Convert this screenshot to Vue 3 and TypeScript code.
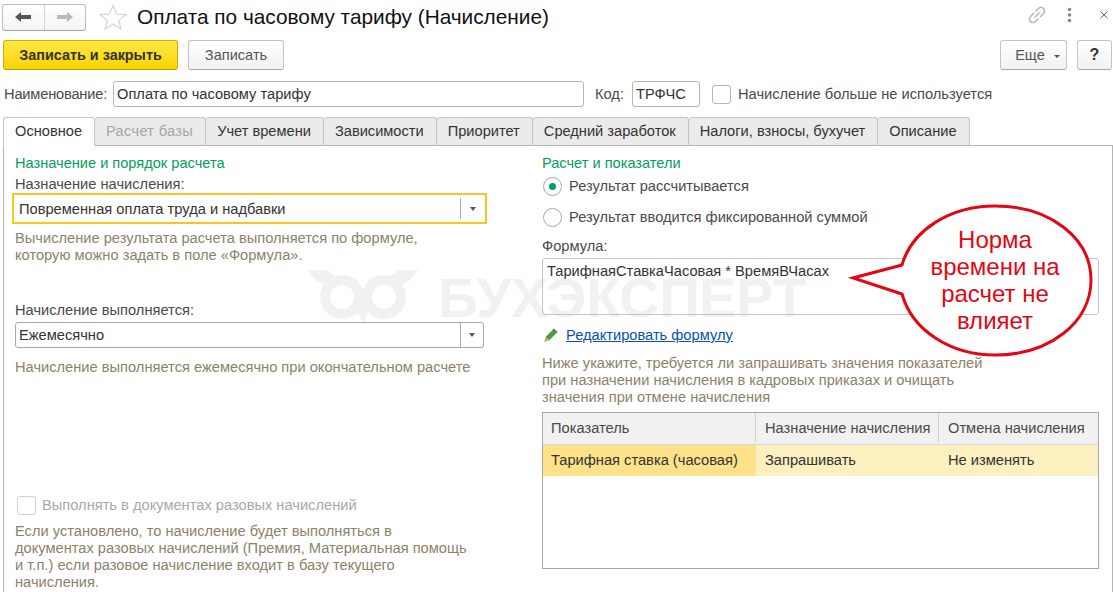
<script setup lang="ts">
const tabs: { name: string; active?: boolean; disabled?: boolean }[] = [
  { name: 'Основное', active: true },
  { name: 'Расчет базы', disabled: true },
  { name: 'Учет времени' },
  { name: 'Зависимости' },
  { name: 'Приоритет' },
  { name: 'Средний заработок' },
  { name: 'Налоги, взносы, бухучет' },
  { name: 'Описание' },
]
</script>

<template>
  <div class="page">
    <header class="head">
      <div class="nav">
        <button class="nav-btn">
          <svg width="18" height="12" viewBox="0 0 18 12"><path d="M1 6 L7 1 V4 H17 V8 H7 V11 Z" fill="#555" /></svg>
        </button>
        <button class="nav-btn">
          <svg width="18" height="12" viewBox="0 0 18 12"><path d="M17 6 L11 1 V4 H1 V8 H11 V11 Z" fill="#bbb" /></svg>
        </button>
      </div>
      <svg class="star" width="28" height="26" viewBox="0 0 28 26">
        <path d="M14 1.500 L17.600 10 L26.800 10.600 L19.700 16.400 L22 25 L14 20.300 L6 25 L8.300 16.400 L1.200 10.600 L10.400 10 Z" fill="#fff" stroke="#d4d4d4" stroke-width="1.200" />
      </svg>
      <h1 class="title">Оплата по часовому тарифу (Начисление)</h1>
      <div class="head-icons">
        <svg width="20" height="20" viewBox="0 0 20 20" fill="none" stroke="#b5b5b5" stroke-width="1.500">
          <path d="M8.500 6.500 L11.500 3.500 A3.200 3.200 0 0 1 16.500 8.500 L13 12" />
          <path d="M11.500 13.500 L8.500 16.500 A3.200 3.200 0 0 1 3.500 11.500 L7 8" />
          <path d="M7.500 12.500 L12.500 7.500" />
        </svg>
        <svg class="kebab" width="6" height="16" viewBox="0 0 6 16" fill="#8a8a8a"><circle cx="2.500" cy="2.500" r="1.800" /><circle cx="2.500" cy="8" r="1.800" /><circle cx="2.500" cy="13.500" r="1.800" /></svg>
        <svg class="close" width="8" height="8" viewBox="0 0 8 8" stroke="#666" stroke-width="1" fill="none"><path d="M0.500 0.500 L7.500 7.500 M7.500 0.500 L0.500 7.500" /></svg>
      </div>
    </header>

    <div class="toolbar">
      <button class="btn primary">Записать и закрыть</button>
      <button class="btn">Записать</button>
      <div class="spacer"></div>
      <button class="btn more">Еще <i class="caret"></i></button>
      <button class="btn help">?</button>
    </div>

    <div class="name-row">
      <label class="name-label">Наименование:</label>
      <div class="input name-input">Оплата по часовому тарифу</div>
      <label class="code-label">Код:</label>
      <div class="input code-input">ТРФЧС</div>
      <span class="check"></span>
      <label>Начисление больше не используется</label>
    </div>

    <nav class="tabs">
      <div v-for="t in tabs" :key="t.name" class="tab" :class="{ active: t.active, disabled: t.disabled }">{{ t.name }}</div>
    </nav>

    <section class="panel">
      <div class="mark">
        <svg width="114" height="60" viewBox="0 0 114 60" fill="#f1f1f3" stroke="none">
          <path d="M2 2 H22 C26 8 30 9 36 9 L26 18 C16 18 8 12 2 2 Z" />
          <path d="M112 2 H92 C88 8 84 9 78 9 L88 18 C98 18 106 12 112 2 Z" />
          <circle cx="36" cy="29" r="17" fill="none" stroke="#f1f1f3" stroke-width="10" />
          <circle cx="78" cy="29" r="17" fill="none" stroke="#f1f1f3" stroke-width="10" />
          <path d="M50 40 L57 56 L64 40 L57 34 Z" />
        </svg>
        <span>БУХЭКСПЕРТ</span>
      </div>

      <div class="col left">
        <h2 class="group">Назначение и порядок расчета</h2>
        <div class="label">Назначение начисления:</div>
        <div class="select focus"><span>Повременная оплата труда и надбавки</span><i class="drop"><b></b></i></div>
        <p class="hint h1">Вычисление результата расчета выполняется по формуле,<br />которую можно задать в поле «Формула».</p>
        <div class="label l2">Начисление выполняется:</div>
        <div class="select"><span>Ежемесячно</span><i class="drop"><b></b></i></div>
        <p class="hint h2">Начисление выполняется ежемесячно при окончательном расчете</p>
        <div class="once">
          <span class="check off"></span>
          <span class="off-text">Выполнять в документах разовых начислений</span>
        </div>
        <p class="hint h3">Если установлено, то начисление будет выполняться в<br />документах разовых начислений (Премия, Материальная помощь<br />и т.п.) если разовое начисление входит в базу текущего<br />начисления.</p>
      </div>

      <div class="col right">
        <h2 class="group">Расчет и показатели</h2>
        <div class="radio-row r1"><span class="radio on"></span>Результат рассчитывается</div>
        <div class="radio-row r2"><span class="radio"></span>Результат вводится фиксированной суммой</div>
        <div class="label l3">Формула:</div>
        <div class="formula">ТарифнаяСтавкаЧасовая * ВремяВЧасах</div>
        <div class="edit">
          <svg width="16" height="16" viewBox="0 0 16 16">
            <path d="M11 1.500 L14.500 5 L6 13.500 L2.500 10 Z" fill="#4f9a3c" />
            <path d="M11 1.500 L14.500 5 L13 6.500 L9.500 3 Z" fill="#7d7d60" />
            <path d="M2.500 10 L6 13.500 L1.200 15 Z" fill="#c9a878" />
          </svg>
          <a class="link">Редактировать формулу</a>
        </div>
        <p class="hint h4">Ниже укажите, требуется ли запрашивать значения показателей<br />при назначении начисления в кадровых приказах и очищать<br />значения при отмене начисления</p>
        <div class="grid">
          <div class="gh">
            <div class="c1">Показатель</div>
            <div class="c2">Назначение начисления</div>
            <div class="c3">Отмена начисления</div>
          </div>
          <div class="gr">
            <div class="c1">Тарифная ставка (часовая)</div>
            <div class="c2">Запрашивать</div>
            <div class="c3">Не изменять</div>
          </div>
        </div>
      </div>
    </section>

    <div class="callout">
      <svg width="280" height="165" viewBox="0 0 280 165">
        <path d="M82 65 L33 78 L82 94 C92 130 130 155 175 155 C230 155 271 122 271 80 C271 38 230 6 175 6 C130 6 92 30 82 65 Z" fill="#fff" stroke="#e30613" stroke-width="3" />
      </svg>
      <div class="callout-text">Норма<br />времени на<br />расчет не<br />влияет</div>
    </div>
  </div>
</template>

<style>
html, body { margin: 0; background: #fff; overflow: hidden; }
</style>

<style scoped>
.page {
  position: relative;
  width: 1113px;
  height: 592px;
  overflow: hidden;
  background: #fff;
  font-family: "Liberation Sans", Arial, sans-serif;
  font-size: 14.67px;
  color: #333;
  box-sizing: border-box;
}
button { font-family: inherit; cursor: default; }
p, h1, h2 { margin: 0; font-weight: normal; }

.head { display: flex; align-items: center; height: 30px; padding: 2px 0 0 2px; }
.nav { display: flex; width: 84px; height: 27px; border: 1px solid #bdbdbd; border-bottom-color: #a5a5a5; border-radius: 3px; box-sizing: border-box; background: linear-gradient(#fff, #f4f4f4); }
.nav-btn { flex: 1; border: 0; background: none; padding: 0; display: flex; align-items: center; justify-content: center; }
.nav-btn + .nav-btn { border-left: 1px solid #d4d4d4; }
.star { margin-left: 13px; }
.title { margin-left: 10px; font-size: 20.8px; color: #111; white-space: nowrap; }
.head-icons { margin: -4px 0 0 auto; display: flex; align-items: center; width: 86px; }
.kebab { margin-left: 20px; }
.close { margin-left: 27px; }

.toolbar { display: flex; align-items: stretch; height: 30px; margin-top: 8px; padding: 0 1px 0 3px; gap: 10px; }
.spacer { flex: 1; }
.btn { height: 30px; border: 1px solid #c4c4c4; border-bottom-color: #a8a8a8; border-radius: 3px; background: linear-gradient(#fff, #f1f1f1); color: #555; font-size: 14.6px; padding: 0; box-sizing: border-box; width: 96px; }
.primary { width: 175px; border-color: #cfb000; border-bottom-color: #b99e00; background: linear-gradient(#ffe94a, #f9d400); color: #333; font-weight: bold; font-size: 14.4px; }
.more { width: 67px; padding-left: 8px; }
.help { width: 35px; font-weight: bold; color: #333; font-size: 16px; }
.caret { display: inline-block; margin-left: 5px; vertical-align: 2px; border: 3px solid transparent; border-top: 3px solid #555; border-bottom: 0; }

.name-row { display: flex; align-items: center; height: 26px; margin-top: 11px; padding-left: 4px; color: #4a4a4a; }
.name-label { flex: none; width: 101px; letter-spacing: -0.2px; white-space: nowrap; }
.input { flex: none; height: 26px; line-height: 24px; border: 1px solid #b5b5b5; border-radius: 3px; box-sizing: border-box; padding-left: 3px; color: #333; }
.name-input { width: 471px; margin-left: 8px; }
.code-label { flex: none; width: 29px; margin-left: 11px; }
.code-input { width: 68px; margin-left: 8px; }
.check { flex: none; display: inline-block; width: 19px; height: 19px; border: 1px solid #b5b5b5; border-radius: 3px; box-sizing: border-box; margin: 0 7px 0 12px; background: #fff; }

.tabs { display: flex; height: 29px; margin-top: 10px; padding-left: 3px; position: relative; z-index: 1; font-size: 14.63px; }
.tab { height: 29px; line-height: 27px; padding: 0 12px 0 11px; box-sizing: border-box; background: #ebebeb; border: 1px solid #c4c4c4; border-left-width: 0; border-radius: 3px 3px 0 0; border-bottom-color: #b5b5b5; white-space: nowrap; }
.tab.active { background: #fff; border-left-width: 1px; border-bottom-color: #fff; }
.tab.disabled { color: #a5a5a5; letter-spacing: 0.3px; }

.panel { position: relative; display: flex; height: 460px; margin: -1px 0 0 3px; border: 1px solid #b5b5b5; box-sizing: border-box; width: 1110px; }
.mark { position: absolute; left: 302px; top: 120px; display: flex; align-items: center; gap: 18px; color: #f1f1f3; font-size: 55.500px; font-weight: bold; white-space: nowrap; }
.mark svg { flex: none; }
.col { position: relative; display: flex; flex-direction: column; }
.left { width: 470px; margin-left: 11px; }
.right { width: 558px; margin-left: 57px; }
.group { color: #00a05a; font-size: 14.6px; line-height: 16px; margin-top: 9px; }
.label { line-height: 16px; color: #4a4a4a; margin-top: 5px; }
.select { position: relative; display: flex; align-items: center; height: 26px; border: 1px solid #a8a8a8; border-radius: 3px; box-sizing: border-box; margin-top: 4px; padding-left: 3px; color: #333; width: 469px; }
.select span { flex: 1; }
.select.focus { width: 475px; height: 31px; border: 2px solid #fcc41f; border-radius: 0; margin: 1px 0 0 -3px; padding-left: 5px; }
.drop { flex: none; width: 23px; height: 100%; display: flex; align-items: center; justify-content: center; position: relative; }
.focus .drop { width: 25px; }
.drop::before { content: ""; position: absolute; left: 0; top: 3px; bottom: 3px; width: 1px; background: #a8a8a8; }
.select:not(.focus) .drop::before { top: 0; bottom: 0; }
.drop b { border: 3.500px solid transparent; border-top: 4px solid #555; border-bottom: 0; }
.hint { color: #8c8268; line-height: 17px; white-space: nowrap; }
.h1 { margin-top: 6px; }
.l2 { margin-top: 38px; }
.h2 { margin-top: 11px; }
.once { display: flex; align-items: center; margin-top: 119px; height: 20px; }
.check.off { margin: 0 6px 0 2px; border-color: #cfcfcf; }
.off-text { color: #a8a8a8; }
.h3 { margin-top: 8px; }

.radio-row { display: flex; align-items: center; height: 20px; color: #4a4a4a; }
.r1 { margin-top: 5px; }
.r2 { margin-top: 11px; }
.radio { position: relative; flex: none; width: 19px; height: 19px; border: 1px solid #a8a8a8; border-radius: 50%; box-sizing: border-box; margin: 0 7px 0 1px; background: #fff; }
.radio.on::after { content: ""; position: absolute; left: 5px; top: 5px; width: 7px; height: 7px; border-radius: 50%; background: #00a05a; }
.l3 { margin-top: 11px; }
.formula { height: 57px; border: 1px solid #c4c4c4; border-radius: 3px; box-sizing: border-box; margin-top: 4px; padding: 3px 0 0 4px; line-height: 18px; width: 557px; }
.edit { display: flex; align-items: center; gap: 7px; margin-top: 11px; height: 18px; padding-left: 1px; }
.link { color: #0b4fb5; text-decoration: underline; }
.h4 { margin-top: 11px; }
.grid { width: 557px; height: 157px; margin-top: 6px; border: 1px solid #a8a8a8; box-sizing: border-box; }
.gh, .gr { display: flex; height: 31px; }
.gh { background: #f1f1f1; height: 32px; padding-bottom: 2px; box-sizing: border-box; border-bottom: 1px solid #d8d8d8; color: #4a4a4a; }
.gr { background: #fdf0c0; padding-bottom: 0; }
.c1, .c2, .c3 { display: flex; align-items: center; box-sizing: border-box; padding-left: 9px; white-space: nowrap; }
.gr .c1, .gr .c2, .gr .c3 { padding-bottom: 2px; }
.c1 { width: 213px; padding-left: 8px; }
.c2 { width: 183px; }
.c3 { flex: 1; }
.gh .c1, .gh .c2 { border-right: 1px solid #d0d0d0; }
.gr .c1 { background: #fde28a; }

.callout { position: absolute; left: 820px; top: 200px; width: 280px; height: 165px; }
.callout-text { position: absolute; left: 75px; width: 200px; top: 26px; text-align: center; color: #e30613; font-size: 24px; line-height: 27px; }
</style>
